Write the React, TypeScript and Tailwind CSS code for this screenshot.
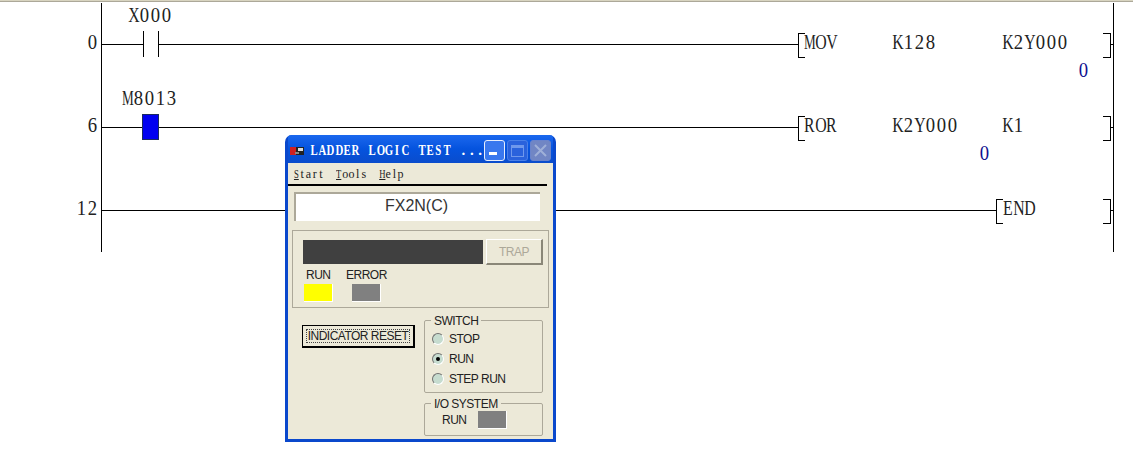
// every glyph sits in a fixed cell, the original uses a half-width bitmap font
function CellText({ text, cell, underlineFirst }: { text: string; cell: string; underlineFirst?: boolean }) {
  return (
    <span className="inline-flex">
      {text.split('').map((ch, i) => (
        <span key={i} className={`flex justify-center whitespace-pre ${cell}`}>
          <span
            className={`inline-block ${underlineFirst && i === 0 ? 'underline' : ''} ${
              ch === 'M' ? 'scale-x-[0.6]' : /[0-9]/.test(ch) ? 'scale-x-[0.85]' : /[A-Z]/.test(ch) ? 'scale-x-[0.72]' : ''
            }`}
          >
            {ch}
          </span>
        </span>
      ))}
    </span>
  )
}

function Label({ x, y, text, blue }: { x: number; y: number; text: string; blue?: boolean }) {
  return (
    <div
      className={`absolute font-['Liberation_Serif',serif] text-[22px] leading-[22px] ${blue ? 'text-[#101090]' : 'text-[#222]'}`}
      style={{ left: x, top: y }}
    >
      <CellText text={text} cell="w-[11px]" />
    </div>
  )
}

function Ladder() {
  return (
    <>
      <svg className="absolute left-0 top-0" width="1133" height="449" shapeRendering="crispEdges">
        <g stroke="#000" strokeWidth="1" fill="none">
          <path d="M101.5 3V252M1113.5 3V252" />
          <path d="M102 44.5H143M158 44.5H798M143.5 31V57M158.5 31V57" />
          <path d="M102 127.5H143M158 127.5H798" />
          <path d="M102 210.5H285M556 210.5H996" />
          <path d="M805 33.5H798.5V57.5H805M1103 33.5H1110.5V57.5H1103M1111 44.5H1113" />
          <path d="M805 116.5H798.5V140.5H805M1103 116.5H1110.5V140.5H1103M1111 127.5H1113" />
          <path d="M1003 199.5H996.5V223.5H1003M1103 199.5H1110.5V223.5H1103M1111 210.5H1113" />
        </g>
        <rect x="142.5" y="114.5" width="16" height="25" fill="#0000f0" stroke="#1a2a60" />
      </svg>
      <Label x={128} y={4} text="X000" />
      <Label x={122} y={87} text="M8013" />
      <Label x={87} y={31} text="0" />
      <Label x={87} y={114} text="6" />
      <Label x={76} y={197} text="12" />
      <Label x={804} y={31} text="MOV" />
      <Label x={892} y={31} text="K128" />
      <Label x={1002} y={31} text="K2Y000" />
      <Label x={1078} y={59} text="0" blue />
      <Label x={804} y={114} text="ROR" />
      <Label x={892} y={114} text="K2Y000" />
      <Label x={1002} y={114} text="K1" />
      <Label x={979} y={142} text="0" blue />
      <Label x={1002} y={197} text="END" />
    </>
  )
}

function Swatch({ color }: { color: string }) {
  return <div className={`h-[18px] w-[29px] border-b border-r border-white ${color}`} />
}

function Radio({ label, checked }: { label: string; checked?: boolean }) {
  return (
    <div className="flex h-[20px] items-center gap-[5px]">
      <div className="flex h-[12px] w-[12px] items-center justify-center rounded-full border border-b-white border-l-[#707070] border-r-white border-t-[#707070] bg-[#c6dccf]">
        {checked && <div className="h-[4px] w-[4px] rounded-full bg-black" />}
      </div>
      <span>{label}</span>
    </div>
  )
}

function Group({ title, className, children }: { title: string; className: string; children: React.ReactNode }) {
  return (
    <div className={`relative rounded-[2px] border border-[#aca899] ${className}`}>
      <span className="absolute -top-[7px] left-[6px] bg-[#ece9d8] px-[3px] leading-[14px]">{title}</span>
      {children}
    </div>
  )
}

function TestWindow() {
  return (
    <div className="absolute left-[285px] top-[135px] flex h-[307px] w-[271px] flex-col overflow-hidden rounded-t-[7px] bg-[#0a48cc] px-[3px] pb-[3px] font-['Liberation_Sans',sans-serif] text-[12px] tracking-[-0.5px] text-[#222]">
      <div className="flex h-[28px] shrink-0 items-center bg-gradient-to-b from-[#1a68ee] via-[#0553de] to-[#0a4ccc] pl-[2px] pt-[3px]">
        <svg width="14" height="8" viewBox="0 0 14 8" className="shrink-0">
          <rect width="14" height="8" fill="#222" />
          <rect width="6" height="8" fill="#d02020" />
          <rect x="8" y="1" width="5" height="3" fill="#ddd" />
          <rect x="5" y="5" width="4" height="2" fill="#888" />
        </svg>
        <span className="ml-[6px] flex-1 font-['Liberation_Serif',serif] text-[15px] font-bold leading-none tracking-normal text-white">
          <CellText text="LADDER LOGIC TEST ..." cell="w-[8.3px]" />
        </span>
        <div className="flex gap-[2px] pr-[2px]">
          <div className="flex h-[21px] w-[21px] items-end justify-start rounded-[3px] border border-[#e8eefc] bg-[#3a78ee] pb-[5px] pl-[4px]">
            <div className="h-[3px] w-[8px] bg-white" />
          </div>
          <div className="flex h-[21px] w-[21px] items-center justify-center rounded-[3px] border border-[#4a80e8] bg-[#2a62dc]">
            <div className="h-[12px] w-[13px] border border-t-[3px] border-[#6f98ec]" />
          </div>
          <div className="flex h-[21px] w-[21px] items-center justify-center rounded-[3px] border border-[#6a84cc] bg-[#7186c4]">
            <svg width="13" height="13" viewBox="0 0 13 13" stroke="#9fb0d8" strokeWidth="2">
              <path d="M1 1L12 12M12 1L1 12" />
            </svg>
          </div>
        </div>
      </div>

      <div className="flex flex-1 flex-col bg-[#ece9d8]">
        <div className="flex h-[21px] shrink-0 items-center gap-[12px] pl-[5px] font-['Liberation_Serif',serif] text-[12px] tracking-normal">
          <CellText text="Start" cell="w-[6.2px]" underlineFirst />
          <CellText text="Tools" cell="w-[6.2px]" underlineFirst />
          <CellText text="Help" cell="w-[6.2px]" underlineFirst />
        </div>
        <div className="mr-[6px] h-[2px] shrink-0 bg-black" />

        <div className="ml-[6px] mr-[13px] mt-[6px] flex h-[29px] shrink-0 items-center justify-center border-l-2 border-t-2 border-[#aca899] bg-white pb-[3px] pr-[3px] text-[16px] tracking-normal text-[#333]">
          FX2N(C)
        </div>

        <div className="mx-[4px] mt-[9px] h-[78px] shrink-0 border border-[#aca899] pl-[10px] pr-[4px] pt-[8px]">
          <div className="flex items-center gap-[3px]">
            <div className="h-[24px] w-[180px] shrink-0 bg-[#404040]" />
            <div className="flex h-[26px] w-[57px] shrink-0 items-center justify-center border border-b-2 border-r-2 border-white border-b-[#8a8778] border-r-[#8a8778] text-[#aca899]">
              TRAP
            </div>
          </div>
          <div className="ml-[1px] mt-[4px] flex gap-[20px]">
            <div className="flex w-[28px] flex-col">
              <span className="ml-[2px] h-[15px] leading-[13px]">RUN</span>
              <Swatch color="bg-[#ffff00]" />
            </div>
            <div className="flex w-[28px] flex-col">
              <span className="ml-[-6px] h-[15px] leading-[13px]">ERROR</span>
              <Swatch color="bg-[#808080]" />
            </div>
          </div>
        </div>

        <div className="mt-[12px] flex flex-1 pl-[14px]">
          <div className="mt-[5px] flex h-[23px] w-[113px] items-center justify-center whitespace-nowrap border border-b-2 border-r-2 border-black bg-[#ece9d8] leading-none">
            <span className="border border-dotted border-[#444] px-[1px]">INDICATOR RESET</span>
          </div>
          <div className="ml-[9px] flex flex-col">
            <Group title="SWITCH" className="h-[73px] w-[119px] pl-[7px] pt-[8px]">
              <Radio label="STOP" />
              <Radio label="RUN" checked />
              <Radio label="STEP RUN" />
            </Group>
            <Group title="I/O SYSTEM" className="mt-[10px] flex h-[33px] w-[119px] items-center pl-[17px] pt-[1px]">
              <span className="mr-[11px]">RUN</span>
              <Swatch color="bg-[#808080]" />
            </Group>
          </div>
        </div>
      </div>
    </div>
  )
}

export default function App() {
  return (
    <div className="relative h-[449px] w-[1133px] overflow-hidden bg-white">
      <div className="h-[2px] border-b border-[#aca899] bg-[#d8d4c0]" />
      <Ladder />
      <TestWindow />
    </div>
  )
}
